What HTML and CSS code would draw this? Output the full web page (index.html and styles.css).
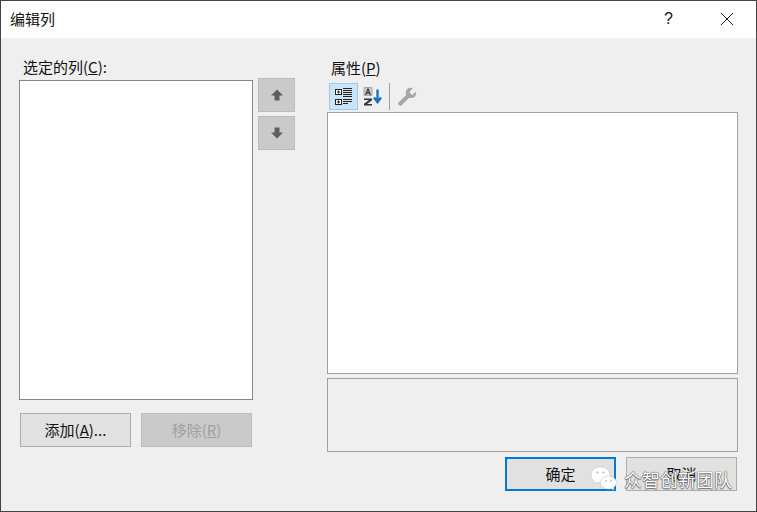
FILE: index.html
```html
<!DOCTYPE html>
<html lang="zh">
<head>
<meta charset="utf-8">
<title>编辑列</title>
<link rel="stylesheet" href="styles.css">
</head>
<body>
<div class="window">
  <header class="titlebar">
    <span class="title">编辑列</span>
    <span class="help">?</span>
    <svg class="close" width="14" height="14" viewBox="0 0 14 14"><path d="M1 1L13 13M13 1L1 13" stroke="#1a1a1a" stroke-width="1" fill="none"/></svg>
  </header>
  <main class="content">
    <section class="left">
      <div class="label label-left">选定的列(<u>C</u>):</div>
      <div class="list-row">
        <div class="list"></div>
        <div class="arrows">
          <div class="arrow"><svg width="12" height="12" viewBox="0 0 12 12"><path d="M6 0.500L12 6.500H8.500V11.500H3.500V6.500H0Z" fill="#5e5e5e"/></svg></div>
          <div class="arrow"><svg width="12" height="12" viewBox="0 0 12 12"><path d="M6 11.500L12 5.500H8.500V0.500H3.500V5.500H0Z" fill="#5e5e5e"/></svg></div>
        </div>
      </div>
      <div class="left-buttons">
        <div class="btn">添加(<u>A</u>)...</div>
        <div class="btn btn-disabled">移除(<u>R</u>)</div>
      </div>
    </section>
    <section class="right">
      <div class="label label-right">属性(<u>P</u>)</div>
      <div class="toolbar">
        <div class="tool tool-on">
          <svg width="18" height="18" viewBox="0 0 18 18">
            <path d="M0 1h7v6H0zM0 11h7v6H0z" fill="#222"/>
            <path d="M1 2h5v4H1zM1 12h5v4H1z" fill="#fff"/>
            <path d="M2 4h3M2 14h3" stroke="#222" stroke-width="1.200"/>
            <path d="M3.500 2.500v3M3.500 12.500v3" stroke="#222"/>
            <path d="M8 0.500h9M8 2.500h9M8 4.500h9M8 6.500h9M8 8.500h9" stroke="#222" stroke-width="1.100"/>
            <path d="M8 11.500h9M8 13.500h9M8 15.500h5" stroke="#222" stroke-width="1.100"/>
          </svg>
        </div>
        <div class="tool tool-sort">
          <svg width="22" height="20" viewBox="0 0 22 20">
            <path d="M2 0.500h8v8H2z" fill="#c9c9c9" stroke="#aaa"/>
            <path d="M3.500 8L6 2L8.500 8M4.500 6h3" stroke="#444" stroke-width="1.300" fill="none"/>
            <path d="M2 11.500h8v1.700L5 17h5v1.500H2v-1.700L7 13H2z" fill="#333"/>
            <path d="M15 3v12" stroke="#fff" stroke-width="4"/>
            <path d="M15.500 2.500v11M12 10.500L15.500 15L19 10.500" stroke="#1a6fb5" stroke-width="2.400" fill="none"/>
          </svg>
        </div>
        <div class="divider"></div>
        <div class="tool tool-wrench">
          <svg width="20" height="20" viewBox="0 0 20 20"><path d="M19 4.500L15.300 8L12.300 5.200L15.800 1.300C12.500 -0.200 8.800 2.200 8.800 5.700C8.800 6.600 9 7.300 9.300 8L1.500 15.500C0 17.200 2.800 20 4.500 18.500L12 10.800C16 12.200 20.200 8.700 19 4.500Z" fill="#a6a6a6"/></svg>
        </div>
      </div>
      <div class="grid-box"></div>
      <div class="desc-box"></div>
      <div class="right-buttons">
        <div class="btn btn-default">确定</div>
        <div class="btn">取消</div>
      </div>
    </section>
  </main>
  <div class="watermark">
    <svg width="28" height="25" viewBox="0 0 28 25">
      <path d="M10.500 1C5 1 1 4.500 1 9C1 11.500 2.300 13.500 4.200 15L3.500 18L7 16.300C8.200 16.700 9.300 16.900 10.500 16.900C16 16.900 20 13.400 20 9C20 4.500 16 1 10.500 1Z" fill="#fff" stroke="#c8c8c8" stroke-width="0.600"/>
      <path d="M18.500 10C14 10 10.500 13 10.500 16.500C10.500 20 14 23 18.500 23C19.500 23 20.300 22.800 21.200 22.500L24 24L23.400 21.500C25.300 20.300 26.500 18.500 26.500 16.500C26.500 13 23 10 18.500 10Z" fill="#fff" stroke="#c8c8c8" stroke-width="0.600"/>
      <circle cx="7.500" cy="6.500" r="1.100" fill="#bbb"/><circle cx="13.500" cy="6.500" r="1.100" fill="#bbb"/>
      <circle cx="16" cy="15" r="0.900" fill="#bbb"/><circle cx="21" cy="15" r="0.900" fill="#bbb"/>
    </svg>
    <span class="wm-text">众智创新团队</span>
  </div>
</div>
</body>
</html>
```

FILE: styles.css
```css
* { box-sizing: border-box; }
html, body { margin: 0; padding: 0; }
body {
  width: 757px;
  height: 512px;
  overflow: hidden;
  font-family: "Noto Sans CJK SC", "Liberation Sans", sans-serif;
  font-size: 15px;
  color: #111;
}
.window {
  position: relative;
  width: 757px;
  height: 512px;
  display: flex;
  flex-direction: column;
  background: #efefef;
  border: 1px solid #444;
}
.titlebar {
  height: 37px;
  flex: none;
  background: #fff;
  display: flex;
  align-items: center;
  padding: 0 22px 1px 9px;
}
.title { flex: 1; font-size: 15px; line-height: 20px; }
.help { font-size: 16px; font-family: "Liberation Sans", sans-serif; margin-right: 47px; }
.content {
  flex: 1;
  display: flex;
  padding-left: 18px;
  min-height: 0;
}
.left { width: 308px; flex: none; display: flex; flex-direction: column; }
.right { width: 411px; flex: none; display: flex; flex-direction: column; }
.label { font-size: 15px; line-height: 20px; white-space: nowrap; }
.label-left { padding: 19px 0 0 4px; height: 42px; }
.label-right { padding: 20px 0 0 4px; height: 44px; }
.list-row { display: flex; align-items: flex-start; }
.list {
  width: 234px;
  height: 320px;
  background: #fff;
  border: 1px solid #828790;
}
.arrows { display: flex; flex-direction: column; gap: 4px; margin: -2px 0 0 5px; }
.arrow {
  width: 37px;
  height: 34px;
  background: #cacaca;
  border: 1px solid #bcbcbc;
  display: flex;
  align-items: center;
  justify-content: center;
}
.left-buttons { display: flex; gap: 10px; margin: 13px 0 0 1px; }
.btn {
  width: 111px;
  height: 34px;
  background: #e1e1e1;
  border: 1px solid #adadad;
  display: flex;
  align-items: center;
  justify-content: center;
  font-size: 15px;
  line-height: 20px;
}
.btn-disabled { background: #cacaca; border-color: #bcbcbc; color: #a0a0a0; }
.btn-default { border: 2px solid #0078d7; }
.toolbar { display: flex; align-items: center; height: 30px; padding: 1px 0 2px 2px; flex: none; }
.tool { width: 29px; height: 27px; display: flex; align-items: center; justify-content: center; border: 1px solid transparent; }
.tool-on { background: #cce4f7; border-color: #99ccf0; }
.tool-sort { width: 30px; }
.tool-wrench { width: 27px; margin-left: 3px; }
.divider { width: 1px; height: 27px; background: #a0a0a0; margin: 0 0 0 1px; }
.grid-box {
  height: 262px;
  background: #fff;
  border: 1px solid #a0a0a0;
  flex: none;
}
.desc-box {
  height: 74px;
  margin-top: 4px;
  background: #efefef;
  border: 1px solid #a0a0a0;
  flex: none;
}
.right-buttons { display: flex; gap: 10px; margin: 5px 0 0 178px; }
.watermark {
  position: absolute;
  left: 589px;
  top: 465px;
  display: flex;
  align-items: center;
  gap: 6px;
}
.wm-text {
  font-size: 18px;
  line-height: 24px;
  color: #fff;
  text-shadow: 0 0 1px #444, 0 0 1px #444, 0 1px 1px #777;
  white-space: nowrap;
}
```
